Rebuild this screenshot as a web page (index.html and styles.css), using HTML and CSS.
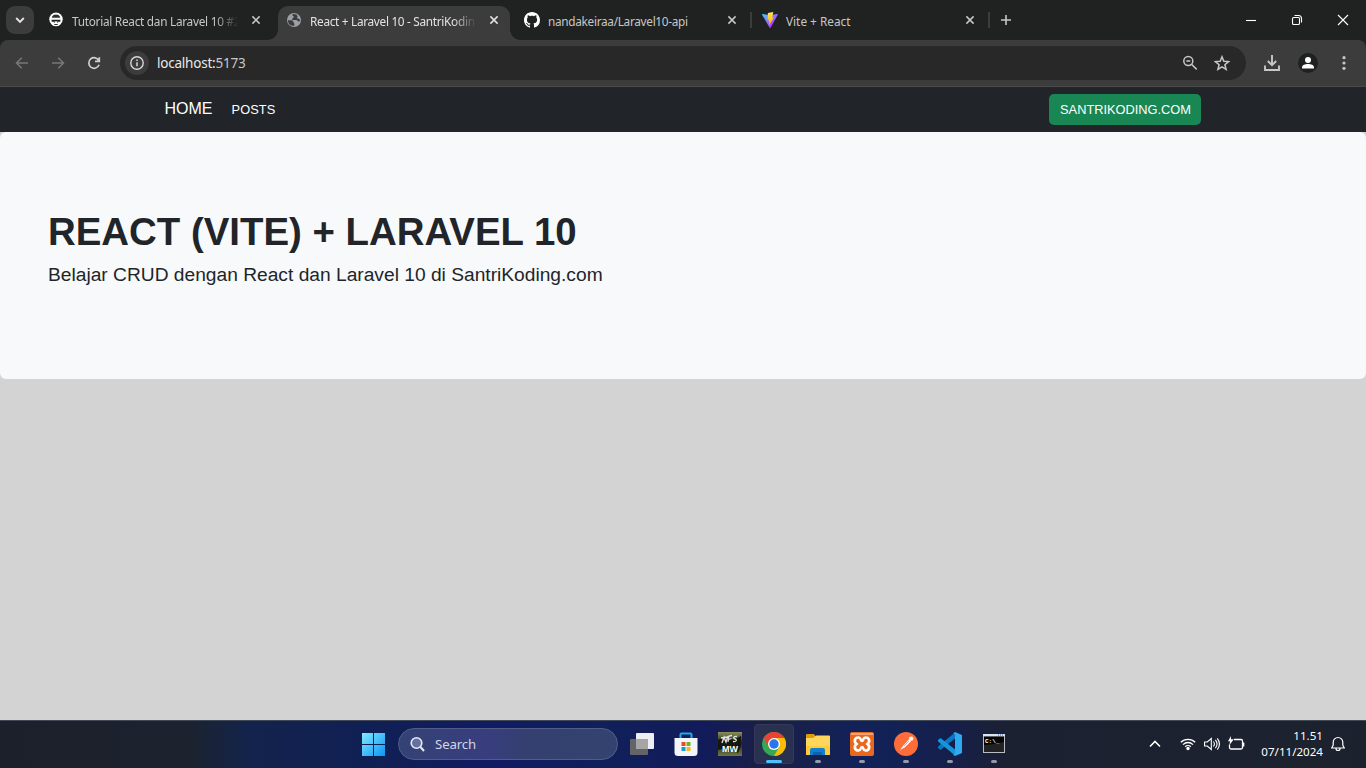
FILE: index.html
```html
<!DOCTYPE html>
<html lang="en">
<head>
<meta charset="utf-8">
<title>React + Laravel 10 - SantriKoding.com</title>
<link rel="stylesheet" href="styles.css">
</head>
<body>
<header class="tabstrip">
  <button class="tab-search" aria-label="Search tabs"><svg width="28" height="28" viewBox="0 0 28 28"><path d="M10.2 12l3.800 3.800 3.800-3.800" fill="none" stroke="#e3e3e3" stroke-width="1.9"/></svg></button>
  <div class="tabs">
    <div class="tab">
      <svg class="favicon" viewBox="0 0 16 16"><circle cx="8" cy="7.200" r="6.700" fill="#fff"/><path d="M2.500 9h11l-1.300 3.700Q8 16 3.800 12.700Z" fill="#fff"/><path d="M3.700 5.800Q4.500 2.500 8 2.500t4.300 3.300Z" fill="#303231"/><path d="M3.400 7.800h9.200l-.4 2H9.700L8 9.300l-1.700.5H3.800Z" fill="#202221"/><path d="M5.800 10.200h1M9.200 10.200h1M6.300 12.500h3.400" stroke="#303231" stroke-width="1"/></svg>
      <span class="tab-title tab-title-fade title-tutorial">Tutorial React dan Laravel 10 #2</span>
      <svg class="tab-close" viewBox="0 0 10 10"><path d="M1.400 1.400l7.200 7.200M8.600 1.400L1.400 8.600"/></svg>
    </div>
    <div class="tab tab-active">
      <svg class="favicon" viewBox="0 0 16 16"><circle cx="8" cy="8" r="7" fill="#9aa0a6"/><path d="M2 8.200h3.200c1.300 0 2.300.8 2.300 2 0 .7.900.8.900 1.700v1.900C4.500 14.300 1.700 11.500 2 8.200ZM7.100 2.100c-1.100.5-1 2 .5 2.100.3 1.400-.1 2.100-1.400 2.200v1.500h3.900c1.300 0 1.500 1.500 2.700 1.600.9 0 1.200-.6 1.200-1.500-.5-.2-.5-1.500-1.900-1.500-1.100 0-1.500-.9-.7-1.600.5-.4.3-1.200-.5-1.300l-.3-1Z" fill="#3c3c3c"/></svg>
      <span class="tab-title tab-title-fade title-react">React + Laravel 10 - SantriKodin</span>
      <svg class="tab-close" viewBox="0 0 10 10"><path d="M1.400 1.400l7.200 7.200M8.600 1.400L1.400 8.600"/></svg>
    </div>
    <div class="tab tab-divided">
      <svg class="favicon" viewBox="0 0 16 16"><path fill="#fff" d="M8 0C3.580 0 0 3.580 0 8c0 3.540 2.290 6.530 5.470 7.590.4.070.55-.17.55-.38 0-.19-.01-.82-.01-1.490-2.010.37-2.530-.49-2.690-.94-.09-.23-.48-.94-.82-1.130-.28-.15-.68-.52-.01-.53.63-.01 1.080.58 1.230.82.72 1.210 1.870.87 2.330.66.07-.52.280-.87.510-1.070-1.780-.2-3.640-.89-3.640-3.950 0-.87.310-1.590.82-2.150-.08-.2-.36-1.020.08-2.120 0 0 .67-.21 2.200.82.640-.18 1.320-.27 2-.27s1.360.09 2 .27c1.530-1.040 2.200-.82 2.200-.82.44 1.100.16 1.920.08 2.120.51.56.82 1.270.82 2.150 0 3.070-1.870 3.750-3.650 3.950.29.25.54.73.54 1.480 0 1.070-.01 1.930-.01 2.200 0 .21.150.46.550.38A8 8 0 0 0 16 8c0-4.420-3.580-8-8-8Z"/></svg>
      <span class="tab-title title-github">nandakeiraa/Laravel10-api</span>
      <svg class="tab-close" viewBox="0 0 10 10"><path d="M1.400 1.400l7.200 7.200M8.600 1.400L1.400 8.600"/></svg>
    </div>
    <div class="tab tab-divided">
      <svg class="favicon" viewBox="0 0 32 32"><defs><linearGradient id="vite-a" x1="0" x2=".7" y1="0" y2=".8"><stop stop-color="#41d1ff"/><stop offset="1" stop-color="#bd34fe"/></linearGradient><linearGradient id="vite-b" x1="0" x2="0" y1="0" y2="1"><stop stop-color="#ffea83"/><stop offset=".2" stop-color="#ffdd35"/><stop offset="1" stop-color="#ffa800"/></linearGradient></defs><path d="M31.500 5.600L17 31.300a1 1 0 0 1-1.800 0L.3 5.600A1 1 0 0 1 1.400 4L16 6.700 30.400 4c.9-.1 1.500.8 1.100 1.600Z" fill="url(#vite-a)"/><path d="M22.600.1L11.800 2.200l-.7 14 3-.6-1 4.400 2-.5-1.500 8 10-16.600-3.300.6Z" fill="url(#vite-b)"/></svg>
      <span class="tab-title title-vite">Vite + React</span>
      <svg class="tab-close" viewBox="0 0 10 10"><path d="M1.400 1.400l7.200 7.200M8.600 1.400L1.400 8.600"/></svg>
    </div>
  </div>
  <svg class="new-tab" width="34" height="40" viewBox="0 0 34 40"><path d="M9 20h10M14 15v10" stroke="#c7c7c7" stroke-width="1.600"/></svg>
  <div class="window-controls">
    <svg viewBox="0 0 46 40"><path d="M18 20.500h10"/></svg>
    <svg viewBox="0 0 46 40"><rect x="18.500" y="17.500" width="7" height="7" rx="1.300"/><path d="M20.500 15.500h4a3 3 0 0 1 3 3v4"/></svg>
    <svg viewBox="0 0 46 40"><path d="M18 15l10 10M28 15L18 25"/></svg>
  </div>
</header>

<div class="toolbar-backdrop">
  <div class="toolbar">
    <svg class="nav-icon nav-muted" viewBox="0 0 16 16"><path d="M14 8H2.500M7.800 2.700L2.500 8l5.300 5.300"/></svg>
    <svg class="nav-icon nav-muted" viewBox="0 0 16 16"><path d="M2 8h11.500M8.200 2.700L13.500 8l-5.300 5.300"/></svg>
    <svg class="nav-icon" viewBox="0 0 16 16"><path d="M13.100 9.800A5.300 5.300 0 1 1 12.900 5.700M13.300 2.200v4.200H9"/></svg>
    <div class="omnibox">
      <div class="site-info"><svg width="16" height="16" viewBox="0 0 16 16"><circle cx="8" cy="8" r="6.200" fill="none" stroke="#d8d8d8" stroke-width="1.400"/><path d="M8 7.200v4M8 4.600v1.500" stroke="#d8d8d8" stroke-width="1.500"/></svg></div>
      <div class="address"><span class="host">localhost:</span>5173</div>
      <svg class="omni-icon" viewBox="0 0 16 16"><circle cx="6.300" cy="6" r="4.500"/><path d="M4.300 6h4M9.500 9.200l5.200 5.200"/></svg>
      <svg class="omni-icon" viewBox="0 0 16 16"><path d="M8 1.800l1.800 4.400 4.800.4-3.700 3.100 1.200 4.600L8 11.800l-4.100 2.500 1.200-4.600L1.400 6.600l4.800-.4Z"/></svg>
    </div>
    <svg class="download" width="18" height="18" viewBox="0 0 18 18"><path d="M9 1v10M4.800 7L9 11.200 13.200 7M2 11.500V16h14v-4.500" fill="none" stroke="#c7c7c7" stroke-width="1.900"/></svg>
    <svg class="profile" width="20" height="20" viewBox="0 0 20 20"><circle cx="10" cy="10" r="10" fill="#1f2120"/><circle cx="10" cy="6.900" r="3" fill="#fff"/><path d="M4 15.500v-1.200c0-2.100 3-3.300 6-3.300s6 1.200 6 3.300v1.200Z" fill="#fff"/></svg>
    <svg class="more" width="4" height="16" viewBox="0 0 4 16"><g fill="#c7c7c7"><circle cx="2" cy="2.700" r="1.600"/><circle cx="2" cy="8" r="1.600"/><circle cx="2" cy="13.300" r="1.600"/></g></svg>
  </div>
</div>

<main class="page">
  <nav class="navbar">
    <a class="brand">HOME</a>
    <a class="nav-link">POSTS</a>
    <a class="btn-site">SANTRIKODING.COM</a>
  </nav>
  <section class="hero">
    <h1 class="hero-title">REACT (VITE) + LARAVEL 10</h1>
    <p class="hero-text">Belajar CRUD dengan React dan Laravel 10 di SantriKoding.com</p>
  </section>
</main>

<footer class="taskbar">
  <svg class="start" width="24" height="24" viewBox="0 0 24 24"><defs><linearGradient id="win" x1="0" y1="0" x2="1" y2="1"><stop stop-color="#80eaff"/><stop offset="1" stop-color="#0b93f5"/></linearGradient><clipPath id="win-c"><path d="M1 1h11v11H1ZM13 1h11v11H13ZM1 13h11v11H1ZM13 13h11v11H13Z"/></clipPath></defs><rect x="1" y="1" width="23" height="23" fill="url(#win)" clip-path="url(#win-c)"/></svg>
  <div class="search"><svg width="16" height="16" viewBox="0 0 16 16"><circle cx="6.500" cy="7" r="5.300" fill="#65719e" stroke="#e7e9f1" stroke-width="1.600"/><path d="M10.500 11l3.500 4" stroke="#e7e9f1" stroke-width="2"/></svg><span>Search</span></div>
  <div class="apps">
    <div class="app"><svg viewBox="0 0 24 24"><rect x="6" y="1" width="18" height="16" rx="1" fill="#eceef1"/><rect x="0" y="7" width="18" height="16" rx="1" fill="#646468"/><path d="M6 7h11a1 1 0 0 1 1 1v9H6Z" fill="#a5a5a7"/></svg></div>
    <div class="app"><svg viewBox="0 0 24 24"><path d="M6.500 7V2.500a1 1 0 0 1 1-1h9a1 1 0 0 1 1 1V7" fill="none" stroke="#20a9ed" stroke-width="2"/><path d="M.5 6h23v14.500a3.500 3.500 0 0 1-3.500 3.500H4a3.500 3.500 0 0 1-3.500-3.500Z" fill="#f3f5f8"/><path d="M7.500 10h4v4h-4Z" fill="#e84a25"/><path d="M12.500 10h4v4h-4Z" fill="#72b21b"/><path d="M7.500 15h4v4h-4Z" fill="#159bdd"/><path d="M12.500 15h4v4h-4Z" fill="#fdb714"/></svg></div>
    <div class="app"><svg viewBox="0 0 24 24"><defs><linearGradient id="mw" x2="0" y2="1"><stop stop-color="#8a8f5c"/><stop offset=".45" stop-color="#202914"/><stop offset="1" stop-color="#707643"/></linearGradient></defs><rect width="24" height="24" fill="url(#mw)"/><path d="M0 8l4-2 2 4 5-5 4 3 8-4v10l-3 7-5-3-4 2-7-3-4 1Z" fill="#16180f"/><path d="M4 11l2-6 2 5 2-6M10 10l1-6 3-.5M10.500 7.500l3-1M19 4.500c-4-.5-4 2-2 2.500s2 3-2 2.500M3 6l6-1" fill="none" stroke="#e2e2e2" stroke-width="1.300"/><text x="12" y="19.500" text-anchor="middle" class="mw-text">MW</text></svg></div>
    <div class="app app-active"><svg viewBox="0 0 24 24"><circle cx="12" cy="12" r="12" fill="#34a853"/><path d="M1.600 6A12 12 0 0 1 22.400 6H12L6.800 15Z" fill="#ea4335"/><path d="M22.400 6A12 12 0 0 1 12 24L17.200 15 12 6Z" fill="#fbbc04"/><circle cx="12" cy="12" r="6" fill="#fff"/><circle cx="12" cy="12" r="4.700" fill="#2876ee"/></svg></div>
    <div class="app app-open"><svg viewBox="0 0 24 24"><path d="M0 3a1 1 0 0 1 1-1h7l2 3v4H0Z" fill="#dc9b0b"/><path d="M0 6h7l3-2.500h13a1 1 0 0 1 1 1V23H1a1 1 0 0 1-1-1Z" fill="#ffd65c"/><path d="M0 14h24v9H1a1 1 0 0 1-1-1Z" fill="#ffcb3d"/><path d="M4 18a2 2 0 0 1 2-2h11a2 2 0 0 1 2 2v5H4Z" fill="#127ed0"/><path d="M7 20h9v3H7Z" fill="#1062a8"/></svg></div>
    <div class="app app-open"><svg viewBox="0 0 24 24"><rect width="24" height="24" rx="2" fill="#e9681d"/><path d="M1 1h22v2H1Z" fill="#f5a273"/><path d="M8.500 5.500c-4 0-4.800 4.200-2 6.500-2.800 2.300-2 6.500 2 6.500 2.700 0 2-3.500 3.500-3.500s.8 3.500 3.500 3.500c4 0 4.800-4.200 2-6.500 2.800-2.300 2-6.500-2-6.500-2.700 0-2 3.500-3.500 3.500s-.8-3.500-3.500-3.500Z" fill="#e9681d" stroke="#fff" stroke-width="2.700"/></svg></div>
    <div class="app app-open"><svg viewBox="0 0 24 24"><circle cx="12" cy="12" r="12" fill="#ff6c37"/><circle cx="17.200" cy="6.600" r="2.200" fill="#fff"/><path d="M15 7.200l2 2-6.400 6.300-4.800 2.800 3.300-4.600Z" fill="#fff"/><path d="M5.500 18.500l2.300-.3-1.100-1ZM10 14l5-5" stroke="#e8663a" stroke-width=".6" fill="#fff"/></svg></div>
    <div class="app app-open"><svg viewBox="0 0 24 24"><path d="M17 0.500v6L2.500 18 0 16V14.500Z" fill="#0878c4"/><path d="M17 23.500v-6L2.500 6 0 8v1.500Z" fill="#1595dd"/><path d="M17 0l7 3v18l-7 3-2-1.500L17 22V2l-2-.5Z" fill="#2eaaf3"/></svg></div>
    <div class="app app-open"><svg viewBox="0 0 24 24"><rect x="1" y="2" width="22" height="19" fill="#b9bdc5"/><rect x="1" y="2" width="22" height="2" fill="#dce4ef"/><path d="M16 3h1m1 0h1m1 0h1" stroke="#3656b5"/><rect x="2" y="4.500" width="20" height="15.500" fill="#050505"/><path d="M2 13Q12 13 22 10v10H2Z" fill="#222"/><text x="3" y="11" class="cmd-text">C:\_</text></svg></div>
  </div>
  <div class="tray">
    <svg width="12" height="16" viewBox="0 0 12 16"><path d="M1 10.500l5-5 5 5" fill="none" stroke="#fff" stroke-width="1.600"/></svg>
    <svg class="wifi" width="16" height="16" viewBox="0 0 16 16"><g fill="none" stroke="#fff" stroke-width="1.300"><path d="M.8 6.300a10.200 10.200 0 0 1 14.400 0M3 8.600a7 7 0 0 1 10 0M5.200 10.800a4 4 0 0 1 5.600 0"/></g><circle cx="8" cy="12.500" r="1.700" fill="#fff"/></svg>
    <svg width="16" height="16" viewBox="0 0 16 16"><g fill="none" stroke="#fff" stroke-width="1.100"><path d="M.6 6h2.700L7.300 2.500v11L3.300 10H.6ZM9.400 5.500q2 2.500 0 5M11.400 3.800q3.300 4.200 0 8.400M13.300 2.300q4.300 5.700 0 11.400"/></g></svg>
    <svg width="17" height="16" viewBox="0 0 17 16"><path d="M6 3.500h7A1.500 1.500 0 0 1 14.500 5v6.500A1.500 1.500 0 0 1 13 13H3a1.500 1.500 0 0 1-1.500-1.500V8.500M15.700 6.500v4" fill="none" stroke="#fff" stroke-width="1.300"/><path d="M3 0v3.300H5.800L1.500 9 2 5.300H0Z" fill="#fff"/></svg>
    <div class="clock"><span>11.51</span><span class="date">07/11/2024</span></div>
    <svg width="14" height="16" viewBox="0 0 14 16"><path d="M.7 12h12.600l-1.500-2.800V6.300a4.800 4.800 0 0 0-9.600 0v2.900ZM5 12.500a2 2 0 0 0 4 0" fill="none" stroke="#fff" stroke-width="1.200"/></svg>
  </div>
</footer>
</body>
</html>
```
FILE: styles.css
```css
* { box-sizing: border-box; }
body {
  margin: 0;
  width: 1366px;
  height: 768px;
  overflow: hidden;
  display: flex;
  flex-direction: column;
  background: #d3d3d3;
  font-family: "Noto Sans", "Open Sans", sans-serif;
}
svg { display: block; flex: none; }

/* Tab strip */
.tabstrip { height: 40px; flex: none; display: flex; background: #202221; }
.tab-search { width: 28px; height: 28px; margin: 6px 6px 0; padding: 0; border: 0; border-radius: 9px; background: #3c3c3c; }
.tabs { display: flex; }
.tab { position: relative; width: 238px; height: 40px; padding: 0 17px 0 8px; display: flex; align-items: center; color: #c7c7c7; }
.favicon { width: 16px; height: 16px; }
.tab-title { flex: 1; min-width: 0; height: 18px; margin: 1px 9px 0 8px; white-space: nowrap; font-size: 11.8px; line-height: 18px; }
.tab-title-fade { -webkit-mask-image: linear-gradient(90deg, #000 84%, transparent 98%); mask-image: linear-gradient(90deg, #000 84%, transparent 98%); }
.title-tutorial { letter-spacing: -.27px; }
.title-react { letter-spacing: -.3px; }
.title-github { letter-spacing: -.3px; }
.tab-close { width: 10px; height: 10px; fill: none; stroke: currentColor; stroke-width: 1.5; }
.tab-active { color: #e3e3e3; }
.tab-active::before {
  content: "";
  position: absolute;
  inset: 6px 6px 0 0;
  border-radius: 10px 10px 0 0;
  background: #3c3c3c;
}
.tab-active::after {
  content: "";
  position: absolute;
  left: -10px;
  right: -4px;
  bottom: 0;
  height: 10px;
  background:
    radial-gradient(circle at 0 0, transparent 9.5px, #3c3c3c 10px) left / 10px 10px no-repeat,
    radial-gradient(circle at 100% 0, transparent 9.5px, #3c3c3c 10px) right / 10px 10px no-repeat;
}
.tab-active > * { position: relative; z-index: 1; }
.tab-divided::after { content: ""; position: absolute; right: 2px; top: 12px; width: 2px; height: 16px; background: #3c3c3c; }
.window-controls { margin-left: auto; display: flex; }
.window-controls svg { width: 46px; height: 40px; fill: none; stroke: #fff; stroke-width: 1.1; }

/* Toolbar */
.toolbar-backdrop { flex: none; background: #202221; }
.toolbar { height: 47px; padding: 0 20px 0 14px; display: flex; align-items: center; background: #3c3c3c; border-bottom: 1px solid #4a4a4a; border-radius: 8px 8px 0 0; }
.nav-icon { width: 16px; height: 16px; margin-right: 20px; fill: none; stroke: #d0d0d0; stroke-width: 1.7; }
.nav-muted { stroke: #777; stroke-width: 1.5; }
.omnibox { width: 1126px; height: 34px; margin-left: -2px; padding: 0 16px 0 5px; border-radius: 17px; display: flex; align-items: center; background: #282828; }
.site-info { width: 24px; height: 24px; border-radius: 50%; background: #3c3c3c; display: grid; place-items: center; }
.address { margin-left: 8px; flex: 1; font-size: 13.5px; color: #c7c7c7; letter-spacing: -.22px; }
.host { color: #e8e8e8; }
.omni-icon { width: 16px; height: 16px; margin-left: 16px; fill: none; stroke: #c7c7c7; stroke-width: 1.5; }
.download { margin-left: 17px; }
.profile { margin-left: 17px; }
.more { margin-left: auto; }

/* Page */
.page { flex: 1; font-family: "Liberation Sans", Arial, sans-serif; color: #212529; background: #d3d3d3; }
.navbar { height: 45px; padding: 0 165px 0 164.5px; display: flex; align-items: center; background: #212529; color: #fff; }
.brand { font-size: 16px; margin-top: -2px; }
.nav-link { margin-left: 19px; font-size: 12.8px; letter-spacing: .1px; }
.btn-site { margin-left: auto; width: 152px; height: 31px; border-radius: 5px; background: #198754; font-size: 12.8px; line-height: 31px; text-align: center; text-indent: 1px; }
.hero { height: 247px; padding: 77px 48px; border-radius: 6px; background: #f8f9fb; }
.hero-title { margin: 0; font-size: 38.4px; line-height: 46px; white-space: nowrap; }
.hero-text { margin: 5px 0 0; font-size: 19.2px; line-height: 29px; white-space: nowrap; }

/* Taskbar */
.taskbar {
  height: 48px;
  flex: none;
  display: flex;
  align-items: center;
  color: #fff;
  box-shadow: inset 0 1px #414958;
  background: linear-gradient(90deg, #1c202a 0, #1c232f 190px, #13234c 250px, #101f55 390px, #101b63 490px, #10205a 600px, #121b5b 700px, #1b1f45 765px, #11225a 860px, #151f4b 950px, #1b2131 1010px, #1c222d 1366px);
}
.start { margin-left: 361px; }
.search { width: 220px; height: 32px; margin-left: 13px; padding-left: 11px; border: 1px solid #505d88; border-radius: 16px; display: flex; align-items: center; gap: 9px; background: linear-gradient(90deg, #344275, #383d7e 40%, #34406f 60%, #33436f); color: #d3d7e5; font-size: 13.2px; letter-spacing: -.1px; }
.apps { display: flex; gap: 4px; margin-left: 4px; }
.app { position: relative; width: 40px; height: 40px; display: grid; place-items: center; border-radius: 4px; }
.app svg { width: 24px; height: 24px; }
.app-active { background: #2a3050; border: 1px solid #343a58; }
.app-open::after, .app-active::after { content: ""; position: absolute; left: 17px; bottom: 1px; width: 6px; height: 3px; border-radius: 2px; background: #949aaa; }
.app-active::after { left: 11px; bottom: 0; width: 16px; background: #4cc2ff; }
.mw-text { font: bold 9px "Liberation Sans", sans-serif; fill: #fff; }
.cmd-text { font: bold 6px "Liberation Mono", monospace; fill: #fff; }
.tray { margin-left: auto; padding-right: 21px; display: flex; align-items: center; gap: 8px; }
.tray > svg:first-child { margin-right: 1px; }
.wifi { margin-left: 10px; }
.clock { width: 70px; display: flex; flex-direction: column; align-items: flex-end; font-size: 11.6px; line-height: 16px; }
```
